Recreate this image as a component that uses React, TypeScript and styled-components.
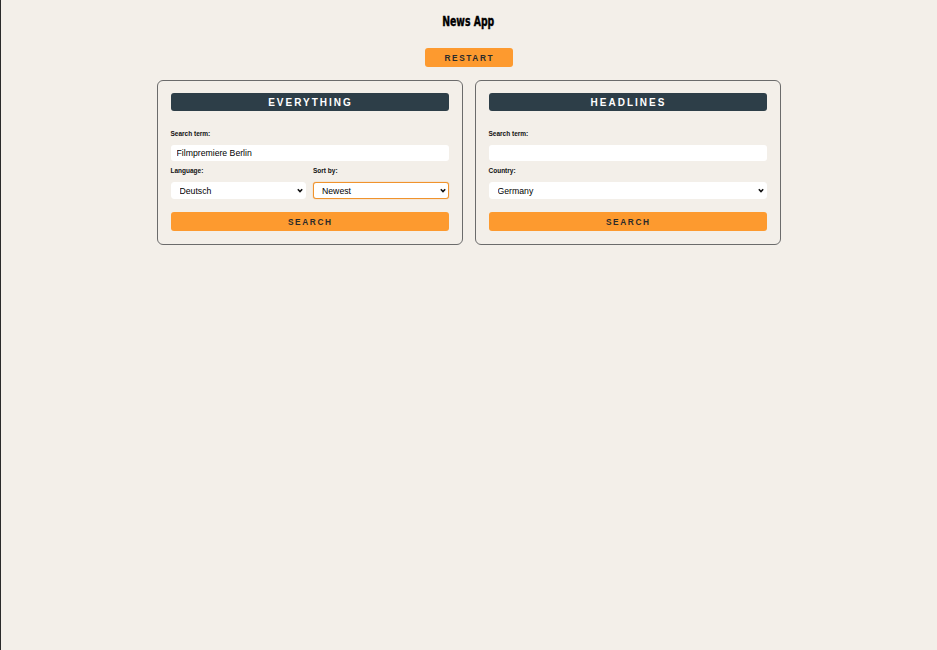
import React from "react";
import styled, { createGlobalStyle } from "styled-components";

const Global = createGlobalStyle`
  html, body { margin: 0; padding: 0; background: #f3efe9; }
  body { font-family: "Liberation Sans", Arial, sans-serif; }
`;

const Page = styled.div`
  min-height: 650px;
  box-sizing: border-box;
  box-shadow: inset 1px 0 0 #2a2a2a;
  display: flex;
  flex-direction: column;
  align-items: center;
  padding-top: 13px;
`;

const Title = styled.h1`
  margin: 0;
  font-family: "DejaVu Sans Condensed", "DejaVu Sans", sans-serif;
  font-weight: 700;
  font-size: 14px;
  line-height: 16px;
  color: #000;
  transform: scaleX(0.74);
  -webkit-text-stroke: 0.4px #000;
`;

const OrangeButton = styled.button`
  border: none;
  border-radius: 3px;
  background: #fd9a2f;
  color: #2b2b2b;
  font-family: "Liberation Sans", Arial, sans-serif;
  font-weight: 700;
  font-size: 8.3px;
  letter-spacing: 1.6px;
  padding: 0 0 0 1.6px;
  cursor: pointer;
`;

const RestartButton = styled(OrangeButton)`
  margin-top: 19px;
  width: 88px;
  height: 19px;
`;

const SearchButton = styled(OrangeButton)`
  margin-top: 13px;
  width: 100%;
  height: 19px;
`;

const Cards = styled.div`
  margin-top: 13px;
  display: flex;
  gap: 12px;
`;

const Card = styled.section`
  width: 306px;
  box-sizing: border-box;
  border: 1px solid #6b6b6b;
  border-radius: 6px;
  padding: 12px 13px 13px 13px;
  display: flex;
  flex-direction: column;
`;

const CardHeader = styled.h2`
  margin: 0;
  height: 18px;
  border-radius: 3px;
  background: #2d3e48;
  color: #fff;
  font-size: 10px;
  font-weight: 700;
  letter-spacing: 2px;
  line-height: 19px;
  text-align: center;
  padding-left: 2px;
`;

const Label = styled.label`
  display: block;
  font-size: 6.5px;
  font-weight: 700;
  color: #111;
  line-height: 8px;
  margin-bottom: 7px;
`;

const Field = styled.div<{ $top: number }>`
  margin-top: ${(p) => p.$top}px;
  flex: 1;
  min-width: 0;
`;

const Row = styled.div`
  display: flex;
  gap: 7px;
`;

const TextInput = styled.input`
  display: block;
  width: 100%;
  box-sizing: border-box;
  height: 16px;
  border: none;
  border-radius: 3px;
  background: #fff;
  padding: 0 6px;
  font-family: "Liberation Sans", Arial, sans-serif;
  font-size: 8.7px;
  color: #000;
  outline: none;
`;

const SelectWrap = styled.div`
  position: relative;
`;

const Select = styled.select<{ $focused?: boolean }>`
  appearance: none;
  -webkit-appearance: none;
  display: block;
  width: 100%;
  box-sizing: border-box;
  height: 17px;
  border: 1px solid ${(p) => (p.$focused ? "#f0932c" : "#fff")};
  box-shadow: ${(p) => (p.$focused ? "0 0 1px 0 #f0932c" : "none")};
  border-radius: 3px;
  background: #fff;
  padding: 0 8px;
  font-family: "Liberation Sans", Arial, sans-serif;
  font-size: 8.7px;
  color: #000;
  outline: none;
`;

const Chevron = styled.svg`
  position: absolute;
  right: 3px;
  top: 6px;
  width: 6px;
  height: 5px;
  pointer-events: none;
`;

function Dropdown({
  value,
  options,
  focused,
}: {
  value: string;
  options: string[];
  focused?: boolean;
}) {
  return (
    <SelectWrap>
      <Select $focused={focused} defaultValue={value}>
        {options.map((o) => (
          <option key={o} value={o}>
            {o}
          </option>
        ))}
      </Select>
      <Chevron viewBox="0 0 6 5">
        <path d="M0.8 1.2 L3 3.6 L5.2 1.2" fill="none" stroke="#111" strokeWidth="1.5" />
      </Chevron>
    </SelectWrap>
  );
}

export default function App() {
  return (
    <>
      <Global />
      <Page>
        <Title>News App</Title>
        <RestartButton>RESTART</RestartButton>
        <Cards>
          <Card>
            <CardHeader>EVERYTHING</CardHeader>
            <Field $top={19}>
              <Label>Search term:</Label>
              <TextInput defaultValue="Filmpremiere Berlin" />
            </Field>
            <Row>
              <Field $top={6}>
                <Label>Language:</Label>
                <Dropdown value="Deutsch" options={["Deutsch", "English"]} />
              </Field>
              <Field $top={6}>
                <Label>Sort by:</Label>
                <Dropdown value="Newest" options={["Newest", "Popularity", "Relevancy"]} focused />
              </Field>
            </Row>
            <SearchButton>SEARCH</SearchButton>
          </Card>
          <Card>
            <CardHeader>HEADLINES</CardHeader>
            <Field $top={19}>
              <Label>Search term:</Label>
              <TextInput defaultValue="" />
            </Field>
            <Field $top={6}>
              <Label>Country:</Label>
              <Dropdown value="Germany" options={["Germany", "United States"]} />
            </Field>
            <SearchButton>SEARCH</SearchButton>
          </Card>
        </Cards>
      </Page>
    </>
  );
}
